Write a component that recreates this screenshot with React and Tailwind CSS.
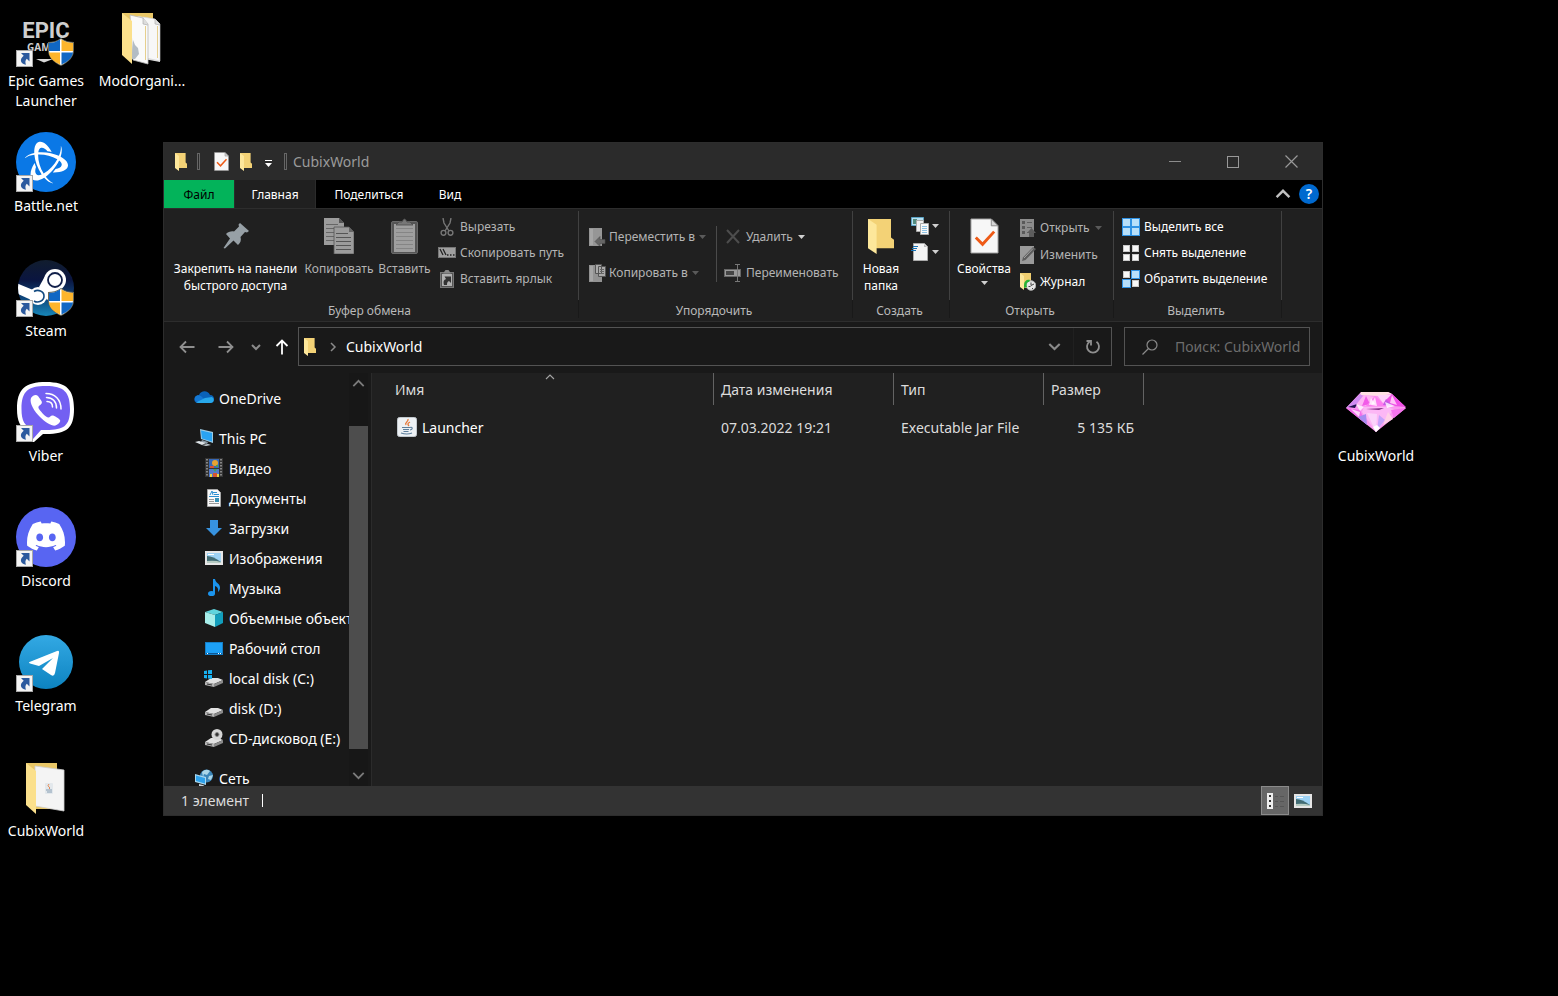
import { SiBattledotnet, SiDiscord } from "react-icons/si";
import { FaPhoneAlt } from "react-icons/fa";

const ShortcutArrow = () => (
  <g>
    <rect x="0.5" y="43.5" width="16" height="16" fill="#f4f4f4" stroke="#a8a8a8" />
    <path d="M5 46h8.500v8.500l-2.700-2.700c-1.600 1.700-1.800 3.500-.8 6C4.500 56.500 3 52.500 7.700 48.700z" fill="#2c5a9e" />
  </g>
);

const Shield = () => (
  <g transform="translate(31 31)">
    <path d="M14 0C10 3 5 4 1 4v8c0 7 5 12 13 16 8-4 13-9 13-16V4C23 4 18 3 14 0z" fill="#6a6a5a" />
    <path d="M14 1C10 4 6 5 2 5v7c0 6 4 11 12 15 8-4 12-9 12-15V5C22 5 18 4 14 1z" fill="#fff" />
    <path d="M13 1.500C9 4 6 5 2 5v8h11z" fill="#1067c4" />
    <path d="M14.500 1.500C18 4 22 5 26 5v8H14.500z" fill="#fdb52c" />
    <path d="M2 14.500h11v12C6.500 23.500 2.500 20 2 14.500z" fill="#fdb52c" />
    <path d="M14.500 14.500H26c-1 5.500-5 9-11.500 12z" fill="#1067c4" />
  </g>
);

const EpicIcon = () => (
  <svg width="60" height="60" viewBox="0 0 60 60">
    <text x="30" y="31" textAnchor="middle" fontSize="22" fontWeight="700" fill="#cfcfcf" className="font-['Liberation_Sans_Narrow','Roboto',sans-serif]">EPIC</text>
    <text x="11" y="44" fontSize="10" fontWeight="700" fill="#cfcfcf" className="font-['Open_Sans',sans-serif]">GAM</text>
    <path d="M20 52h17l-9 3.500z" fill="#d8d8d8" />
    <Shield />
    <ShortcutArrow />
  </svg>
);

const BattleNetIcon = () => (
  <svg width="60" height="60" viewBox="0 0 60 60">
    <circle cx="30" cy="30" r="30" fill="#0a78e6" />
    <SiBattledotnet x="9" y="9" size="43" color="#fff" />
    <ShortcutArrow />
  </svg>
);

const SteamIcon = () => (
  <svg width="60" height="60" viewBox="0 0 60 60">
    <defs>
      <linearGradient id="steam" x1="0" y1="0" x2="0" y2="1">
        <stop offset="0" stopColor="#111d2e" />
        <stop offset="0.35" stopColor="#0a1540" />
        <stop offset="0.7" stopColor="#0f4a80" />
        <stop offset="1" stopColor="#1787b8" />
      </linearGradient>
      <clipPath id="steamClip">
        <circle cx="30" cy="31" r="28" />
      </clipPath>
    </defs>
    <circle cx="30" cy="31" r="28" fill="url(#steam)" />
    <g clipPath="url(#steamClip)">
      <path d="M0 26l22 9v11L0 36z" fill="#fff" />
      <path d="M28.500 20L23 30l8 13 11-9z" fill="#fff" />
      <circle cx="39" cy="23" r="11" fill="#fff" />
      <circle cx="22" cy="39" r="9" fill="#fff" />
      <circle cx="39" cy="23" r="7" fill="none" stroke="#12204a" strokeWidth="1.800" />
      <path d="M18 34.500c4-2.500 10-.5 10 4.500s-6 7.500-10 5" fill="none" stroke="#124a80" strokeWidth="1.600" />
    </g>
    <Shield />
    <ShortcutArrow />
  </svg>
);

const ViberIcon = () => (
  <svg width="60" height="60" viewBox="0 0 60 60">
    <path d="M30 0C9 0 1 7 1 27c0 12 3 19 12 23v10h5l9-8h3c21 0 28-6 28-25S51 0 30 0z" fill="#fff" />
    <path d="M30 4C12 4 5.500 9 5.500 27c0 12 3 17 11.500 20v10l8-9h5c18 0 24-4 24-21S48 4 30 4z" fill="#7360f2" />
    <path d="M15 16c2-3 5-4 7-2l3.500 5c1 2 0 3-2 4.500-2 1.500-1 3 1.500 6s5 5.500 7 6c2 .5 2.500-2.500 5-2 2 .5 6 3 7 4.500 1 2-2 4.500-4.500 5.500-3 1-10-3-15.500-8.500S13 21 15 16z" fill="#fff" />
    <g fill="none" stroke="#fff" strokeWidth="1.500" strokeLinecap="round">
      <path d="M30 11.500c9 0 15 6 15 15.500" />
      <path d="M30.500 15.500c6 0 10 4 10 10.500" />
      <path d="M31 19.500c3.500 0 5.500 2 5.500 5.500" />
    </g>
    <ShortcutArrow />
  </svg>
);

const DiscordIcon = () => (
  <svg width="60" height="60" viewBox="0 0 60 60">
    <circle cx="30" cy="30" r="30" fill="#5865f2" />
    <SiDiscord x="11" y="10" size="38" color="#fff" />
    <ShortcutArrow />
  </svg>
);

const TelegramIcon = () => (
  <svg width="60" height="60" viewBox="0 0 60 60">
    <defs>
      <linearGradient id="telegram" x1="0" y1="0" x2="0" y2="1">
        <stop offset="0" stopColor="#33a9e4" />
        <stop offset="1" stopColor="#0d83c0" />
      </linearGradient>
    </defs>
    <circle cx="30" cy="30" r="27" fill="url(#telegram)" />
    <path d="M13.500 30L41 19q2.500-1 2 2l-4 20q-1 4-4 2l-9-6 11-11-14 8-9-2.500q-2-.8-.5-1.500z" fill="#fff" />
    <ShortcutArrow />
  </svg>
);

const DesktopFolder = ({ twoPages }) => (
  <svg width="60" height="60" viewBox="0 0 60 60">
    <path d="M10 6h31v46H20z" fill="#e9c767" />
    {twoPages ? (
      <g>
        <path d="M26 9l17 3 5 5v38l-16-3z" fill="#dedede" />
        <path d="M31 10l12 2 5 5v37l-14-3z" fill="#f7f7f7" stroke="#cfcfcf" strokeWidth="0.600" />
        <path d="M18 8l13 3 5 6v40l-15-4z" fill="#fafafa" stroke="#b9b9b9" strokeWidth="0.800" />
        <path d="M31 11v6l5 1M43 12v5l5 1" fill="#ddd" stroke="#a5a5a5" strokeWidth="0.600" />
        <path d="M33.500 19v34M45.500 19v32" fill="none" stroke="#e6cf8e" />
        <path d="M21 33l2 5 3 3 1 6-4 5h-3z" fill="#b3bcc4" />
      </g>
    ) : (
      <g>
        <path d="M19 9l29 4v41l-29-5z" fill="#f4f4f4" stroke="#cfcfcf" strokeWidth="0.800" />
        <rect x="29" y="26" width="8" height="11" rx="1" fill="#e3e8ec" />
        <path d="M33 27q-2 2 0 3t0 2" fill="none" stroke="#e58b55" />
        <path d="M30 33h6M31 35h5" stroke="#6f8aa5" strokeWidth="0.800" />
      </g>
    )}
    <path d="M10 6l10 8v43L10 48z" fill="#fbe08c" />
  </svg>
);

const DiamondIcon = () => (
  <svg width="60" height="60" viewBox="0 0 60 60">
    <path d="M15 10h27l4 2 14 14-30 24L0 26z" fill="#fa98f0" />
    <path d="M15 10h27l4 2-13 2-19-1z" fill="#ffe0e4" />
    <path d="M14 12L0 26l9-2 8-10z" fill="#d08cf2" />
    <path d="M18 13l-8 10 10 1 8-9z" fill="#ffb4f5" />
    <path d="M20 14l4 8-8 2z" fill="#f25ce8" />
    <path d="M29 14l-9 10h20z" fill="#fd7cf0" />
    <path d="M29 15l-4 8 6 1z" fill="#ffe1fb" />
    <path d="M31 13l6 8 9-8z" fill="#ffd2fa" />
    <path d="M46 12l14 13-13-1-7-6z" fill="#f04fe6" />
    <path d="M46 13l5 10-7-2z" fill="#ffc3f8" />
    <path d="M40 17l7 7-10-1z" fill="#c45ae4" />
    <path d="M2 25l9-3-2 4z" fill="#20104f" />
    <path d="M18 25h22l8 2-18 23-14-20z" fill="#fcb7f5" />
    <path d="M20 27l18-1-5 2z" fill="#7c2a80" />
    <path d="M0 26l14 2 6 14z" fill="#f36cea" />
    <path d="M5 27l9 3-1 5z" fill="#ffd6fb" />
    <path d="M12 35l8-3 1 11z" fill="#a68bf0" />
    <path d="M21 31l9 19 1-18z" fill="#fbd3fb" />
    <path d="M33 33l-2 15 8-10z" fill="#c5a2fa" />
    <path d="M42 30l-5 13 10-6z" fill="#ffd0e6" />
    <path d="M45 28l15-2-12 10z" fill="#f574ec" />
    <path d="M10 22l8 3-4 4zM39 20l10 4-8 2zM25 16l4 6-6 1z" fill="#fff" opacity="0.800" />
    <path d="M27 45l3 5 4-4-3-3z" fill="#fff" />
  </svg>
);

const DesktopItem = ({ label, icon }) => (
  <button className="flex h-[125px] w-[92px] flex-col items-center gap-1 pt-[7px] text-center text-[14px] leading-5 text-white">
    {icon}
    <span className="w-[88px]">{label}</span>
  </button>
);

const SmallFolder = ({ width = 12, height = 18 }) => (
  <svg width={width} height={height} viewBox="0 0 13 18" preserveAspectRatio="none">
    <path d="M0 0h11.500v9.500l1.500 1.200V15H3z" fill="#f3d276" />
    <path d="M0 0l4.300 3v15L0 15z" fill="#fde79b" />
  </svg>
);

const CheckPage = ({ width = 15, height = 19 }) => (
  <svg width={width} height={height} viewBox="0 0 30 37" preserveAspectRatio="none">
    <path d="M1 1h21l7 7v28H1z" fill="#f7f7f7" stroke="#9b9b9b" />
    <path d="M22 1v7h7z" fill="#d5d5d5" stroke="#8a8a8a" />
    <path d="M6 20l7 7 12-13" fill="none" stroke="#ee5a16" strokeWidth="3" />
  </svg>
);

const PinIcon = () => (
  <svg width="30" height="36" viewBox="0 0 30 36">
    <path d="M19 5l9 8-2 1.500-2-.5-4.500 5c1 3 0 6-2.500 8l-4.500-4.500L4 30.500 2.500 30l6.500-9.500L5 16c2-2 5-3 8-2.500l5-5-.5-2z" fill="#97a0a6" />
  </svg>
);

const CopyIcon = () => (
  <svg width="30" height="36" viewBox="0 0 30 36">
    <path d="M0 0h15l5 5v22H0z" fill="#9c9c9c" />
    <path d="M15 0v5h5z" fill="#555" />
    <path d="M2 6.500h12M2 10.500h15M2 14.500h15M2 18.500h15M2 22.500h15" stroke="#666" />
    <path d="M10 9h15l5 5v22H10z" fill="#9c9c9c" stroke="#555" strokeWidth="0.800" />
    <path d="M25 9v5h5z" fill="#666" />
    <path d="M12 15.500h12M12 19.500h15M12 23.500h15M12 27.500h15M12 31.500h15" stroke="#555" />
  </svg>
);

const PasteIcon = () => (
  <svg width="27" height="36" viewBox="0 0 27 36">
    <rect x="0.500" y="3.500" width="26" height="32" rx="1.500" fill="#555" stroke="#6a6a6a" />
    <rect x="3" y="6" width="21" height="28" fill="#9f9f9f" />
    <path d="M5 10.500h17M5 14.500h17M5 18.500h17M5 22.500h17M5 26.500h17M5 30.500h17" stroke="#858585" />
    <path d="M5 7l3-3h3q2.500-6 5 0h3l3 3z" fill="#777" stroke="#4c4c4c" strokeWidth="0.800" />
  </svg>
);

const CutIcon = () => (
  <svg width="18" height="18" viewBox="0 0 18 18" fill="none" stroke="#777" strokeWidth="1.400">
    <path d="M5 0l1 5 5 8M13 0l-1 5-5 8" />
    <circle cx="5.500" cy="14.800" r="2.400" />
    <circle cx="12.500" cy="14.800" r="2.400" />
  </svg>
);

const CopyPathIcon = () => (
  <svg width="18" height="18" viewBox="0 0 18 18">
    <rect x="0.500" y="3.500" width="17" height="10" fill="#a0a0a0" stroke="#777" />
    <path d="M2 5l3 6M5 5l3 6" stroke="#222" strokeWidth="1.300" />
    <path d="M9 11h1.500M12 11h1.500M15 11h1.500" stroke="#222" strokeWidth="1.500" />
  </svg>
);

const PasteLinkIcon = () => (
  <svg width="18" height="18" viewBox="0 0 18 18">
    <rect x="2.500" y="2.500" width="13" height="15" fill="#555" stroke="#777" />
    <rect x="4" y="4" width="10" height="12" fill="#b0b0b0" />
    <path d="M5 3.500h8L10.500 0h-3z" fill="#888" />
    <path d="M6 15c-1-4 0-5 2-6L6.500 6.500H13V13l-2-2c-2 1-2 2-2 4z" fill="#333" />
  </svg>
);

const MoveToIcon = () => (
  <svg width="18" height="18" viewBox="0 0 18 18">
    <path d="M1 0h13v18H1z" fill="#969696" />
    <path d="M2 1h3v16H2z" fill="#a6a6a6" />
    <path d="M7 13.500l5-5v3h5v4h-5v3z" fill="#666" stroke="#4e4e4e" strokeWidth="0.600" />
  </svg>
);

const CopyToIcon = () => (
  <svg width="18" height="18" viewBox="0 0 18 18">
    <path d="M1 1h13v17H1z" fill="#929292" />
    <path d="M2 2h3v15H2z" fill="#a6a6a6" />
    <path d="M7.500.5h6v9h-6zM10.500 2.500h7v10h-7z" fill="#aaa" stroke="#555" />
    <path d="M12 5.500h4M12 7.500h4M12 9.500h4" stroke="#666" />
  </svg>
);

const DeleteIcon = () => (
  <svg width="18" height="18" viewBox="0 0 18 18">
    <path d="M3 2l12 13M15 2L3 15" stroke="#4d4d4d" strokeWidth="2" />
  </svg>
);

const RenameIcon = () => (
  <svg width="18" height="18" viewBox="0 0 18 18">
    <rect x="0.500" y="5.500" width="16" height="7" fill="#999" stroke="#666" />
    <rect x="2" y="7" width="8" height="4" fill="#444" />
    <path d="M11 .5h5M11 17.500h5M13.500 1v16" stroke="#777" />
  </svg>
);

const NewItemIcon = () => (
  <svg width="18" height="18" viewBox="0 0 18 18">
    <path d="M.5.5h12v8H.5z" fill="#b9e0f2" stroke="#5ca5c6" />
    <path d="M2 2h4v5H2z" fill="#538c7e" />
    <path d="M5.500 3.500h7v11h-7z" fill="#f1f1f1" stroke="#aaa" />
    <path d="M9.500 6.500h8v11h-8z" fill="#fafafa" stroke="#aaa" />
    <path d="M11 9.500h5M11 11.500h5M11 13.500h5M11 15.500h5" stroke="#8fc3e4" />
  </svg>
);

const EasyAccessIcon = () => (
  <svg width="18" height="18" viewBox="0 0 18 18">
    <path d="M2.500.5h11l3 3v14h-14z" fill="#f4f4f4" stroke="#aaa" />
    <path d="M13 1v3h3z" fill="#bbb" />
    <path d="M2 3.500h5M1 5.500h5M0 7.500h5" stroke="#1673b8" strokeWidth="1.200" />
  </svg>
);

const OpenIcon = () => (
  <svg width="16" height="18" viewBox="0 0 16 18">
    <path d="M0 0h14v18H0z" fill="#8d8d8d" />
    <path d="M2 2h3v3H2zM2 7h3v3H2zM2 12h3v3H2z" fill="#5a5a5a" />
    <path d="M7 3.500h5M7 8.500h5M7 13.500h2" stroke="#606060" />
    <path d="M11.500 9l4.500 5h-2v4h-5v-4H7z" fill="#5d5d5d" />
  </svg>
);

const EditIcon = () => (
  <svg width="16" height="18" viewBox="0 0 16 18">
    <path d="M0 0h14v18H0z" fill="#9a9a9a" />
    <path d="M2 15l1-3.500L13 1l3 2L5.500 14z" fill="#5c5c5c" />
    <path d="M4 12l9-9.500" stroke="#b8b8b8" strokeWidth="0.800" />
  </svg>
);

const HistoryIcon = () => (
  <svg width="16" height="18" viewBox="0 0 16 18">
    <path d="M0 0h11v15H3z" fill="#f1cf70" />
    <path d="M0 0l4 3v14l-4-3z" fill="#fde79b" />
    <circle cx="11" cy="12.500" r="4.800" fill="#e6e6e6" stroke="#aaa" />
    <path d="M11 9.500v3l3-1.500M8.500 13.500h2M12 15.500h1" fill="none" stroke="#444" />
    <path d="M4 12c0-4 3-6 6-5l-1 2c-2 0-3 2-2 5l-3 1z" fill="#27b337" />
  </svg>
);

const SelectIcon = ({ cells }) => (
  <svg width="18" height="18" viewBox="0 0 18 18">
    {cells.map((on, i) => (
      <rect
        key={i}
        x={(i % 2) * 9 + (on ? 0.5 : 1.5)}
        y={Math.floor(i / 2) * 9 + (on ? 0.5 : 1.5)}
        width={on ? 8 : 6}
        height={on ? 8 : 6}
        fill={on ? "#b7dffa" : "#f8f8f8"}
        stroke={on ? "#3092e4" : "#c9c9c9"}
      />
    ))}
  </svg>
);

const Caret = ({ color = "#d0d0d0" }) => (
  <svg width="7" height="4" viewBox="0 0 7 4">
    <path d="M0 0h7L3.500 4z" fill={color} />
  </svg>
);

const Chevron = ({ size = 10, rotate = 0, color = "#8a8a8a", stroke = 2 }) => (
  <svg width={size} height={size} viewBox="0 0 10 10">
    <path d="M1 3l4 4 4-4" transform={`rotate(${rotate} 5 5)`} fill="none" stroke={color} strokeWidth={stroke} />
  </svg>
);

const QuickDivider = () => <span className="h-[17px] w-[3px] border border-[#666]" />;

const TitleBar = () => (
  <header className="flex h-[37px] shrink-0 items-center bg-[#2b2b2b]">
    <div className="flex items-center pl-[11px]">
      <SmallFolder />
      <span className="ml-[10px] flex"><QuickDivider /></span>
      <button aria-label="Свойства" className="ml-[14px]"><CheckPage /></button>
      <button aria-label="Новая папка" className="ml-[11px]"><SmallFolder /></button>
      <button aria-label="Настройка панели" className="ml-[13px] flex flex-col items-center gap-[2px] pt-1">
        <span className="h-px w-[7px] bg-white" />
        <Caret color="#fff" />
      </button>
      <span className="ml-[12px] flex"><QuickDivider /></span>
    </div>
    <h1 className="ml-[6px] text-[14px] text-[#9b9b9b]">CubixWorld</h1>
    <div className="ml-auto flex h-full pr-px">
      <button aria-label="Свернуть" className="flex w-[58px] items-center justify-center">
        <span className="h-px w-3 bg-[#8c8c8c]" />
      </button>
      <button aria-label="Развернуть" className="flex w-[58px] items-center justify-center">
        <span className="size-3 border border-[#999]" />
      </button>
      <button aria-label="Закрыть" className="flex w-[59px] items-center justify-center">
        <svg width="13" height="13" viewBox="0 0 13 13">
          <path d="M.5.5l12 12M12.500.5l-12 12" stroke="#999" strokeWidth="1.200" />
        </svg>
      </button>
    </div>
  </header>
);

const Tabs = () => (
  <nav className="flex h-7 shrink-0 items-stretch bg-black text-[12px] text-white">
    <button className="w-[70px] bg-[#03b35a] pt-[2px] text-black">Файл</button>
    <button className="w-[82px] border-x border-[#2b2b2b] bg-[#202020] pt-[2px]">Главная</button>
    <button className="w-[106px] pt-[2px]">Поделиться</button>
    <button className="w-[56px] pt-[2px]">Вид</button>
    <div className="ml-auto flex items-center gap-2 pr-[3px]">
      <button aria-label="Свернуть ленту">
        <Chevron size={16} rotate={180} color="#c0c0c0" stroke={1.5} />
      </button>
      <button aria-label="Справка" className="flex size-5 items-center justify-center rounded-full bg-[#0069cf] text-[14px] leading-5 font-semibold text-white">?</button>
    </div>
  </nav>
);

const RibbonGroup = ({ title, width, children }) => (
  <section className={`${width} flex shrink-0 flex-col`}>
    <div className="flex h-[89px] border-r border-[#414141]">{children}</div>
    <h2 className="h-[18px] border-r border-[#191919] pr-[3px] text-center text-[12px] leading-[22px] text-[#b9b9b9]">{title}</h2>
  </section>
);

const BigButton = ({ icon, lines, width, dim, caret }) => (
  <button className={`${width} ${dim ? "text-[#b4b4b4]" : "text-white"} flex shrink-0 flex-col items-center pt-[7px] leading-[17px] whitespace-nowrap`}>
    <span className="mb-[6px] flex h-9 items-center">{icon}</span>
    {lines.map((line) => <span key={line}>{line}</span>)}
    {caret && <span className="flex h-3 items-center"><Caret /></span>}
  </button>
);

const SmallButton = ({ icon, label, height = "h-[26px]", gap = "gap-1", dim, caret }) => (
  <button className={`${height} ${gap} ${dim ? "text-[#b4b4b4]" : "text-white"} flex items-center whitespace-nowrap`}>
    <span className="shrink-0">{icon}</span>
    {label && <span>{label}</span>}
    {caret && <span className="ml-px flex"><Caret color={caret} /></span>}
  </button>
);

const Ribbon = () => (
  <div className="flex h-[114px] shrink-0 overflow-hidden border-y border-[#2d2d2d] bg-[#202020] pt-[2px] text-[12px]">
    <RibbonGroup title="Буфер обмена" width="w-[415px]">
      <BigButton icon={<PinIcon />} lines={["Закрепить на панели", "быстрого доступа"]} width="w-[143px]" />
      <BigButton icon={<CopyIcon />} lines={["Копировать"]} width="w-[64px]" dim />
      <BigButton icon={<PasteIcon />} lines={["Вставить"]} width="w-[67px]" dim />
      <div className="pt-[3px]">
        <SmallButton icon={<CutIcon />} label="Вырезать" dim />
        <SmallButton icon={<CopyPathIcon />} label="Скопировать путь" dim />
        <SmallButton icon={<PasteLinkIcon />} label="Вставить ярлык" dim />
      </div>
    </RibbonGroup>
    <RibbonGroup title="Упорядочить" width="w-[274px]">
      <div className="w-[137px] pt-2 pl-[9px]">
        <SmallButton icon={<MoveToIcon />} label="Переместить в" height="h-9" gap="gap-[3px]" dim caret="#5a5a5a" />
        <SmallButton icon={<CopyToIcon />} label="Копировать в" height="h-9" gap="gap-[3px]" dim caret="#5a5a5a" />
      </div>
      <div className="mt-[15px] h-[56px] w-px bg-[#4b4b4b]" />
      <div className="pt-2 pl-[7px]">
        <SmallButton icon={<DeleteIcon />} label="Удалить" height="h-9" dim caret="#d0d0d0" />
        <SmallButton icon={<RenameIcon />} label="Переименовать" height="h-9" dim />
      </div>
    </RibbonGroup>
    <RibbonGroup title="Создать" width="w-[97px]">
      <BigButton icon={<SmallFolder width={26} height={35} />} lines={["Новая", "папка"]} width="w-[56px]" />
      <div className="pt-[2px] pl-[2px]">
        <SmallButton icon={<NewItemIcon />} gap="gap-[2px]" caret="#d0d0d0" />
        <SmallButton icon={<EasyAccessIcon />} gap="gap-[2px]" caret="#d0d0d0" />
      </div>
    </RibbonGroup>
    <RibbonGroup title="Открыть" width="w-[164px]">
      <BigButton icon={<CheckPage width={29} height={36} />} lines={["Свойства"]} width="w-[68px]" caret />
      <div className="pt-[3px] pl-[2px]">
        <SmallButton icon={<OpenIcon />} label="Открыть" height="h-[27px]" dim caret="#5a5a5a" />
        <SmallButton icon={<EditIcon />} label="Изменить" height="h-[27px]" dim />
        <SmallButton icon={<HistoryIcon />} label="Журнал" height="h-[27px]" />
      </div>
    </RibbonGroup>
    <RibbonGroup title="Выделить" width="w-[168px]">
      <div className="pt-[3px] pl-2">
        <SmallButton icon={<SelectIcon cells={[true, true, true, true]} />} label="Выделить все" />
        <SmallButton icon={<SelectIcon cells={[false, false, false, false]} />} label="Снять выделение" />
        <SmallButton icon={<SelectIcon cells={[false, true, true, false]} />} label="Обратить выделение" />
      </div>
    </RibbonGroup>
  </div>
);

const Arrow = ({ rotate = 0, color = "#8f8f8f" }) => (
  <svg width="16" height="16" viewBox="0 0 16 16">
    <path d="M15.500 8H1M7 2.500L1.500 8 7 13.500" transform={`rotate(${rotate} 8 8)`} fill="none" stroke={color} strokeWidth="1.800" />
  </svg>
);

const AddressRow = () => (
  <div className="flex h-[51px] shrink-0 items-start bg-[#191919] pt-[5px] pr-3 text-[14px]">
    <div className="flex h-10 w-[134px] items-center pl-[15px]">
      <button aria-label="Назад"><Arrow /></button>
      <button aria-label="Вперед" className="ml-[23px]"><Arrow rotate={180} /></button>
      <button aria-label="Последние" className="ml-[17px]"><Chevron /></button>
      <button aria-label="Вверх" className="ml-[13px]"><Arrow rotate={90} color="#fff" /></button>
    </div>
    <div className="flex h-[39px] min-w-0 flex-1 items-center border border-[#535353] pl-[5px]">
      <SmallFolder />
      <span className="ml-3"><Chevron rotate={-90} stroke={1.5} /></span>
      <button className="ml-2 text-white">CubixWorld</button>
      <button aria-label="Журнал адресов" className="mr-3 ml-auto"><Chevron size={13} stroke={1.6} /></button>
      <button aria-label="Обновить" className="flex h-full w-[38px] items-center justify-center border-l border-[#202020]">
        <svg width="16" height="16" viewBox="0 0 16 16">
          <path d="M11.500 2.800A6 6 0 1 1 4.500 2.800M1.500 2h4.500v4.500" fill="none" stroke="#8f8f8f" strokeWidth="1.800" />
        </svg>
      </button>
    </div>
    <label className="ml-3 flex h-[39px] w-[186px] items-center border border-[#535353] pl-[17px]">
      <svg width="16" height="16" viewBox="0 0 16 16" className="shrink-0">
        <circle cx="10" cy="6" r="5" fill="none" stroke="#8a8a8a" strokeWidth="1.200" />
        <path d="M6.500 9.500L.5 15.500" stroke="#8a8a8a" strokeWidth="1.300" />
      </svg>
      <input aria-label="Поиск" placeholder="Поиск: CubixWorld" className="ml-[17px] w-0 flex-1 bg-transparent outline-none placeholder:text-[#6d6d6d]" />
    </label>
  </div>
);

const OneDriveIcon = () => (
  <svg width="20" height="20" viewBox="0 0 20 20">
    <path d="M5 7c2-5 9-5 11 0 3 0 4 2 4 4s-1 4-4 4H4c-5 0-5-7 1-8z" fill="#0a62b8" />
    <path d="M1 9c2-3 6-2 8 1l8 4H4c-3 0-4-3-3-5z" fill="#1478d4" />
    <path d="M2 14.500l9-4.500 7-1c3 2 2 6-2 6H4z" fill="#28a8ea" />
  </svg>
);

const PcIcon = () => (
  <svg width="20" height="20" viewBox="0 0 20 20">
    <path d="M6 1l13 3v11L7 11z" fill="#9ccbe5" />
    <path d="M7 2.500l11 2.500v8.500L8 10.500z" fill="#29a3f2" />
    <path d="M8 12l6 2-1 2-6-2z" fill="#8c9aa5" />
    <path d="M1 14l4-1 7 2-4 2z" fill="#dfe5e9" />
    <path d="M8 17l6-1 3 1-5 1z" fill="#c5cdd3" />
  </svg>
);

const VideoIcon = () => (
  <svg width="18" height="20" viewBox="0 0 18 20">
    <rect width="18" height="19" fill="#343434" />
    <path d="M2 1v18M16 1v18" stroke="#a1a1a1" strokeWidth="1.500" strokeDasharray="1.500 1.500" />
    <rect x="4" y="1" width="10" height="9" fill="#3767b5" />
    <rect x="4" y="11" width="10" height="8" fill="#547bca" />
    <circle cx="10" cy="5" r="3" fill="#e6a431" />
    <path d="M5 8h4v2H5zM8 15h4v4H8z" fill="#d35331" />
    <path d="M8 11h4l-2 3zM11 7h2v2h-2z" fill="#45a153" />
    <path d="M5 16h2v3H5zM12 16h2v3h-2z" fill="#ead343" />
  </svg>
);

const DocIcon = () => (
  <svg width="18" height="20" viewBox="0 0 18 20">
    <path d="M2.500 1.500h10l3 3v14h-13z" fill="#f8f8f8" stroke="#a7a7a7" />
    <path d="M5 7l2-4 1 4M8 4.500h4M9 6.500h5M4 8.500h10" fill="none" stroke="#2a8ed0" />
    <path d="M4 11.500h5M4 13.500h5M4 15.500h10" stroke="#999" />
    <path d="M10 10h4v4h-4z" fill="#3690b5" />
  </svg>
);

const DownloadIcon = () => (
  <svg width="18" height="20" viewBox="0 0 18 20">
    <path d="M5 2h8v8h4l-8 8-8-8h4z" fill="#3792df" />
  </svg>
);

const PictureIcon = () => (
  <svg width="18" height="20" viewBox="0 0 18 20">
    <rect x="1" y="4" width="16" height="12" fill="#9ed3f5" stroke="#e6e6e6" strokeWidth="2" />
    <path d="M2 8q6 0 14 6v1H2z" fill="#426d75" />
    <path d="M2 13q8-1 14 1v1H2z" fill="#b6cbc2" />
    <path d="M3 6.500h6" stroke="#fff" />
  </svg>
);

const MusicIcon = () => (
  <svg width="18" height="20" viewBox="0 0 18 20">
    <path d="M8 1h2c.5 4 5 4.500 5 8.500 0 2-1 3.500-2 4.500.7-3-.5-5.500-3-6v8H8z" fill="#1b94ed" />
    <ellipse cx="6.500" cy="15.500" rx="3.500" ry="2.600" fill="#1b94ed" />
  </svg>
);

const CubeIcon = () => (
  <svg width="18" height="20" viewBox="0 0 18 20">
    <path d="M9 1l9 3-8 3L0 4z" fill="#5fd4dd" />
    <path d="M0 4l10 3v12L0 15z" fill="#a7eeea" />
    <path d="M10 7l8-3v11l-8 4z" fill="#129ebc" />
  </svg>
);

const DeskIcon = () => (
  <svg width="18" height="20" viewBox="0 0 18 20">
    <rect x="0.500" y="4.500" width="17" height="12" fill="#1da1f7" stroke="#157fc8" />
    <path d="M1 15.500h16" stroke="#0d5896" />
    <path d="M2 15.500h1M13 15.500h1M15 15.500h1" stroke="#fff" />
  </svg>
);

const DiskIcon = ({ kind }) => (
  <svg width="20" height="20" viewBox="0 0 20 20">
    <path d="M1 14l6-4h7l5 2-9 4z" fill="#e2e2e2" />
    <path d="M1 14l9 2v3l-9-2z" fill="#b5b5b5" />
    <path d="M10 16l9-4v3l-9 4z" fill="#8b8b8b" />
    <path d="M3 16l5 1" stroke="#333" strokeWidth="1.200" />
    {kind === "windows" && (
      <path d="M0 3l3-.5V6H0zM4 2.300L8 2v4H4zM0 7h3v3.500L0 10zM4 7h4v4l-4-.5z" fill="#18b1f0" />
    )}
    {kind === "cd" && (
      <g>
        <circle cx="13" cy="6.500" r="5.500" fill="#d6d6d6" />
        <circle cx="13" cy="6.500" r="2" fill="#333" stroke="#888" />
      </g>
    )}
  </svg>
);

const NetworkIcon = () => (
  <svg width="20" height="20" viewBox="0 0 20 20">
    <circle cx="12.500" cy="8" r="6.500" fill="#3a85b8" />
    <path d="M8 4q4-4 8-1l-3 4-3-1-1 3zM15 8l4-1-2 5-3-1z" fill="#aad6e8" />
    <path d="M1 6l11 3v8L1 14z" fill="#a8d7ef" />
    <path d="M2 7.500l9 2.500v5.500l-9-2.500z" fill="#2da1eb" />
    <path d="M5 16l4 1 3 2-7-1z" fill="#c7d3da" />
  </svg>
);

const places = [
  { label: "Видео", icon: <VideoIcon /> },
  { label: "Документы", icon: <DocIcon /> },
  { label: "Загрузки", icon: <DownloadIcon /> },
  { label: "Изображения", icon: <PictureIcon /> },
  { label: "Музыка", icon: <MusicIcon /> },
  { label: "Объемные объекты", icon: <CubeIcon /> },
  { label: "Рабочий стол", icon: <DeskIcon /> },
  { label: "local disk (C:)", icon: <DiskIcon kind="windows" /> },
  { label: "disk (D:)", icon: <DiskIcon /> },
  { label: "CD-дисковод (E:)", icon: <DiskIcon kind="cd" /> },
];

const TreeItem = ({ icon, label, nested }) => (
  <a href="#" className={`${nested ? "pl-10" : "pl-[30px]"} flex h-[30px] shrink-0 items-center gap-[5px] whitespace-nowrap text-white`}>
    <span className="flex w-5 shrink-0 justify-center">{icon}</span>
    {label}
  </a>
);

const Sidebar = () => (
  <aside className="flex w-[208px] shrink-0 border-r border-[#2b2b2b] bg-[#191919] text-[14px]">
    <div className="flex min-w-0 flex-1 flex-col overflow-hidden pt-[10px]">
      <TreeItem icon={<OneDriveIcon />} label="OneDrive" />
      <div className="flex shrink-0 flex-col py-[10px]">
        <TreeItem icon={<PcIcon />} label="This PC" />
        {places.map((place) => <TreeItem key={place.label} {...place} nested />)}
      </div>
      <TreeItem icon={<NetworkIcon />} label="Сеть" />
    </div>
    <div className="mr-[3px] flex w-[19px] flex-col items-center bg-[#171717] pt-1 pb-1">
      <button aria-label="Вверх"><Chevron size={13} rotate={180} color="#7b7b7b" stroke={1.4} /></button>
      <div className="mt-9 mb-5 w-full flex-1 bg-[#4d4d4d]" />
      <button aria-label="Вниз"><Chevron size={13} color="#7b7b7b" stroke={1.4} /></button>
    </div>
  </aside>
);

const JarIcon = () => (
  <svg width="20" height="20" viewBox="0 0 20 20" className="shrink-0">
    <rect x="0.500" y="0.500" width="19" height="19" rx="2" fill="#edf1f4" stroke="#c2c9ce" />
    <path d="M11 2c1 3-4 3-2 6M13 5c-2 1-3 2-1 4" fill="none" stroke="#e67a3c" strokeWidth="1.300" />
    <path d="M5 10.500h8M6 12.500h6M6.500 14.500h5M13 10.500c3-1 3 2 0 2.500M4 16q6 2 11 0" fill="none" stroke="#5d7f9c" strokeWidth="1.100" />
  </svg>
);

const columns = [
  { title: "Имя", width: "w-[342px] pl-[23px]" },
  { title: "Дата изменения", width: "w-[180px] pl-[7px]" },
  { title: "Тип", width: "w-[150px] pl-[7px]" },
  { title: "Размер", width: "w-[100px] pl-[7px]" },
];

const FileList = () => (
  <main className="min-w-0 flex-1 bg-[#202020] text-[14px]">
    <table className="w-[772px] table-fixed border-separate border-spacing-0 text-left">
      <thead>
        <tr className="h-8 text-[#dcdcdc]">
          {columns.map((column, i) => (
            <th key={column.title} className={`${column.width} relative border-r border-[#636363] p-0 font-normal`}>
              {column.title}
              {i === 0 && (
                <span className="absolute -top-px left-[173px]">
                  <Chevron rotate={180} color="#a5a5a5" stroke={1.1} />
                </span>
              )}
            </th>
          ))}
        </tr>
      </thead>
      <tbody>
        <tr className="h-11 text-[#dcdcdc]">
          <td className="p-0 pl-[25px] text-white">
            <div className="flex items-center gap-[5px]">
              <JarIcon />
              Launcher
            </div>
          </td>
          <td className="p-0 pl-[7px]">07.03.2022 19:21</td>
          <td className="p-0 pl-[7px]">Executable Jar File</td>
          <td className="p-0 pr-[10px] text-right">5 135 КБ</td>
        </tr>
      </tbody>
    </table>
  </main>
);

const StatusBar = () => (
  <footer className="flex h-[29px] shrink-0 items-center bg-[#333] pl-[17px] text-[14px] text-[#dcdcdc]">
    <span>1 элемент</span>
    <span className="ml-[13px] h-[13px] w-px bg-white" />
    <div className="ml-auto flex h-full items-center pr-[10px]">
      <button aria-label="Таблица" className="flex h-full w-7 items-center justify-center border border-[#8b8b8b] bg-[#666]">
        <svg width="17" height="16" viewBox="0 0 17 16">
          <path d="M0 0h6v16H0z" fill="#eee" />
          <path d="M2 2h2v2H2zM2 7h2v2H2zM2 12h2v2H2z" fill="#333" />
          <path d="M8 3.500h3M13 3.500h4M8 8.500h3M13 8.500h4M8 13.500h3M13 13.500h4" stroke="#555" />
        </svg>
      </button>
      <button aria-label="Крупные значки" className="ml-[5px]"><PictureIcon /></button>
    </div>
  </footer>
);

const Explorer = () => (
  <section className="absolute top-[142px] right-[235px] bottom-[180px] left-[163px] flex flex-col overflow-hidden border border-[#2d2d2d]">
    <TitleBar />
    <Tabs />
    <Ribbon />
    <AddressRow />
    <div className="flex min-h-0 flex-1">
      <Sidebar />
      <FileList />
    </div>
    <StatusBar />
  </section>
);

export default function App() {
  return (
    <div className="relative h-screen overflow-hidden bg-black font-['Noto_Sans',sans-serif]">
      <div className="flex gap-1">
        <div className="flex flex-col">
          <DesktopItem label="Epic Games Launcher" icon={<EpicIcon />} />
          <DesktopItem label="Battle.net" icon={<BattleNetIcon />} />
          <DesktopItem label="Steam" icon={<SteamIcon />} />
          <DesktopItem label="Viber" icon={<ViberIcon />} />
          <DesktopItem label="Discord" icon={<DiscordIcon />} />
          <DesktopItem label="Telegram" icon={<TelegramIcon />} />
          <DesktopItem label="CubixWorld" icon={<DesktopFolder />} />
        </div>
        <DesktopItem label="ModOrgani..." icon={<DesktopFolder twoPages />} />
      </div>
      <Explorer />
      <div className="absolute top-[375px] right-[136px]">
        <DesktopItem label="CubixWorld" icon={<DiamondIcon />} />
      </div>
    </div>
  );
}
